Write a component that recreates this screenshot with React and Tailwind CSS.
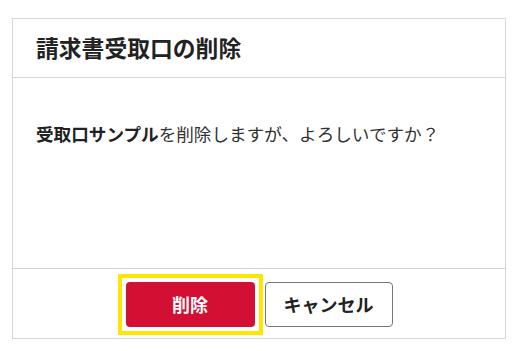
export default function App() {
  return (
    <div className="w-[531px] h-[351px] bg-white pt-[18px] pl-[12px]" style={{ fontFamily: '"Noto Sans CJK JP", "Noto Sans", sans-serif' }}>
      <div className="w-[494px] h-[321px] border border-[#d6d6d6] flex flex-col">
        <div className="h-[59px] border-b border-[#d6d6d6] flex items-center pl-[23px]">
          <h1 className="text-[22.8px] font-bold text-[#222] leading-none">請求書受取口の削除</h1>
        </div>
        <div className="flex-1 pl-[23px] pt-[43px]">
          <p className="text-[17.6px] text-[#333] leading-[26px]">
            <span className="font-bold text-[#222]">受取口サンプル</span>を削除しますが、よろしいですか？
          </p>
        </div>
        <div className="h-[70px] border-t border-[#d6d6d6] flex items-center justify-center gap-[10px] pt-[2px]">
          <div className="-mx-[8px] border-4 border-[#ffe600] p-[4px]">
            <button className="block w-[129px] h-[45px] rounded-[4px] bg-[#d31034] text-white text-[18px] font-bold">
              削除
            </button>
          </div>
          <button className="w-[128px] h-[45px] rounded-[4px] bg-white border border-[#777] text-[#222] text-[18px] font-bold">
            キャンセル
          </button>
        </div>
      </div>
    </div>
  );
}
